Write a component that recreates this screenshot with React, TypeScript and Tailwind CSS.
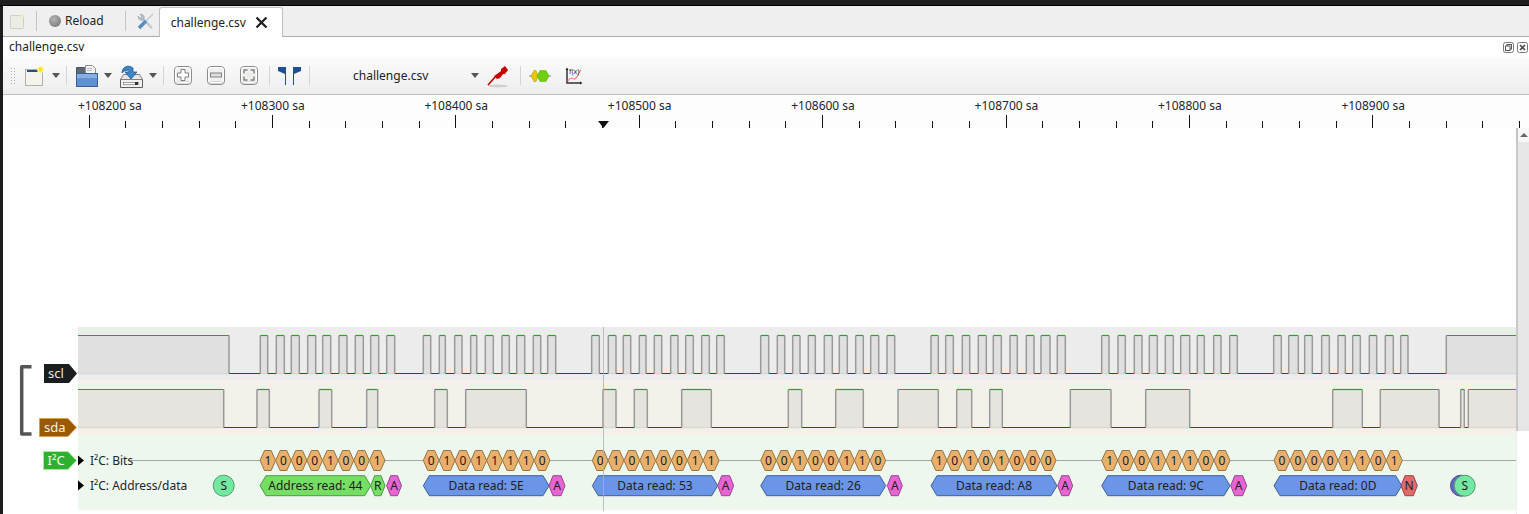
import React from 'react';

// edges read off the reference, in page pixels
const SCL: [number, number][] = [
  [78, 229], [260.3, 267.7], [276.3, 284.3], [291.3, 299.3], [307.7, 315.7], [322.7, 330.7], [339, 347], [355.3, 363.3], [370.7, 378.7], [386.7, 394.7],
  [423.3, 430.7], [439.3, 445.3], [454.7, 462], [470.7, 476.7], [485.3, 493.3], [502, 509.3], [516.7, 524.7], [533.3, 540.7], [547.7, 555.7],
  [591.7, 599.3], [608.3, 616], [623.3, 630.7], [639.3, 646], [654.3, 661.7], [670.7, 678], [685.7, 693.3], [701.7, 709.3], [716.7, 724.3],
  [760.7, 768.7], [777.3, 784.7], [792.7, 800], [808.3, 815.3], [824.3, 832.3], [839.3, 847.3], [855.7, 863.3], [870.7, 878.7], [887, 894.7],
  [931, 938.3], [945.7, 953.3], [962.3, 969.7], [978.3, 986.3], [993.3, 1001.3], [1010, 1017.3], [1026.3, 1034], [1041, 1050], [1057.3, 1065.3],
  [1101.7, 1109], [1118, 1125.3], [1134.3, 1142], [1149.3, 1157.3], [1165.3, 1173.3], [1180.7, 1189.7], [1197.3, 1204.3], [1213.7, 1221], [1229.7, 1237.3],
  [1273.7, 1281.3], [1288.7, 1298.3], [1304.7, 1312.3], [1321.7, 1329.3], [1338, 1345.3], [1352.7, 1360.3], [1369.3, 1376.7], [1385.3, 1393.3], [1400.7, 1408],
  [1446.3, 1516],
];

const SDA: [number, number][] = [
  [78, 223.7], [257, 269.3], [319, 331.7], [366.7, 377.7], [434.7, 447.3], [465.7, 526.3], [603, 616], [634.3, 647.3], [681.7, 711.3],
  [788.3, 801.7], [835.7, 863.3], [898, 938.3], [956.7, 971.7], [989.7, 1002.3], [1070.3, 1111], [1145.7, 1189.7],
  [1332.7, 1362.3], [1380.3, 1439], [1460.7, 1464.3], [1468.3, 1516],
];

const BITS: { from: number; to: number; bits: string }[] = [
  { from: 260, to: 385, bits: '10001001' },
  { from: 423.3, to: 550, bits: '01011110' },
  { from: 592.3, to: 719, bits: '01010011' },
  { from: 760.7, to: 885.7, bits: '00100110' },
  { from: 931.3, to: 1056, bits: '10101000' },
  { from: 1101.7, to: 1230, bits: '10011100' },
  { from: 1274, to: 1402.3, bits: '00001101' },
];

const WORDS: { from: number; to: number; label: string; ackFrom: number; ackTo: number }[] = [
  { from: 423.3, to: 549, label: 'Data read: 5E', ackFrom: 549, ackTo: 565 },
  { from: 592.3, to: 717.7, label: 'Data read: 53', ackFrom: 717.7, ackTo: 733.7 },
  { from: 760.7, to: 885.7, label: 'Data read: 26', ackFrom: 887.3, ackTo: 902.3 },
  { from: 931, to: 1057, label: 'Data read: A8', ackFrom: 1057.7, ackTo: 1072.7 },
  { from: 1101.7, to: 1230, label: 'Data read: 9C', ackFrom: 1230.7, ackTo: 1246.7 },
];

const LABELS = ['+108200 sa', '+108300 sa', '+108400 sa', '+108500 sa', '+108600 sa', '+108700 sa', '+108800 sa', '+108900 sa'];

function Hex({ from, to, y, h, fill, stroke, label, tip = 6 }: { from: number; to: number; y: number; h: number; fill: string; stroke: string; label: string; tip?: number }) {
  const t = Math.min(tip, (to - from) / 2);
  const top = y - h / 2;
  const bot = y + h / 2;
  return (
    <g>
      <polygon points={`${from},${y} ${from + t},${top} ${to - t},${top} ${to},${y} ${to - t},${bot} ${from + t},${bot}`} fill={fill} stroke={stroke} strokeWidth="1" />
      <text x={(from + to) / 2} y={y + 4.4} textAnchor="middle" fontSize="12" fill="#22201c">{label}</text>
    </g>
  );
}

function Wave({ high, hi, lo, under }: { high: [number, number][]; hi: number; lo: number; under: string }) {
  return (
    <g>
      {high.map(([a, b], i) => (
        <rect key={i} x={a} y={hi} width={b - a} height={lo - hi + 0.5} fill="#000" fillOpacity="0.05" />
      ))}
      <line x1="78" x2="1516" y1={lo} y2={lo} stroke="#cc0000" strokeWidth="1.2" />
      {high.map(([a, b], i) => (
        <g key={i}>
          <line x1={a} x2={b} y1={lo} y2={lo} stroke={under} strokeWidth="1.4" />
          <line x1={a} x2={b} y1={hi} y2={hi} stroke="#00bb00" strokeWidth="1.2" />
          {a > 78 && <line x1={a} x2={a} y1={hi} y2={lo} stroke="#9a9a9a" strokeWidth="1.5" />}
          {b < 1516 && <line x1={b} x2={b} y1={hi} y2={lo} stroke="#9a9a9a" strokeWidth="1.5" />}
        </g>
      ))}
    </g>
  );
}

function Ruler() {
  const ticks = [];
  for (let i = 0; i < 40; i++) {
    const x = Math.round(89.5 + i * 36.68) - 0.5;
    ticks.push(<line key={i} x1={x} x2={x} y1={i % 5 === 0 ? 20 : 26} y2="33" stroke="#111" strokeWidth="1" />);
  }
  return (
    <svg width="1526" height="33" viewBox="3 95 1526 33" className="block bg-[#fdfdfd]">
      <g transform="translate(0 95)">{ticks}</g>
      {LABELS.map((l, i) => (
        <text key={l} x={i === 0 ? 78 : 241 + (i - 1) * 183.4} y="110" fontSize="12" fill="#20242c">{l}</text>
      ))}
      <polygon points="598,121 609,121 603.5,128" fill="#111" />
    </svg>
  );
}

function Traces() {
  return (
    <svg width="1438" height="386" viewBox="78 128 1438 386" className="block">
      <rect x="78" y="327" width="1438" height="53" fill="#ececec" />
      <rect x="78" y="380" width="1438" height="55" fill="#f4f0ea" />
      <rect x="78" y="435" width="1438" height="75" fill="#eef7ee" />
      <Wave high={SCL} hi={335.5} lo={373.5} under="#d6d6d6" />
      <Wave high={SDA} hi={389.5} lo={427.5} under="#dcd8d0" />
      <line x1="128" x2="1516" y1="460.5" y2="460.5" stroke="#a4a8a4" strokeWidth="1" />
      <polygon points="78,455.5 84,460.5 78,465.5" fill="#000" />
      <polygon points="78,480.5 84,485.5 78,490.5" fill="#000" />
      <text x="90" y="465" fontSize="12" fill="#22242a">I²C: Bits</text>
      <text x="90" y="490" fontSize="12" fill="#22242a">I²C: Address/data</text>
      {BITS.map((g) => {
        const w = (g.to - g.from) / g.bits.length;
        return g.bits.split('').map((b, i) => (
          <Hex key={`${g.from}-${i}`} from={g.from + i * w} to={g.from + (i + 1) * w} y={460.5} h={20} fill="#e8b06c" stroke="#94733f" label={b} tip={4.5} />
        ));
      })}
      <circle cx="223.7" cy="485.7" r="10.5" fill="#74e8a0" stroke="#4d9e6e" />
      <Hex from={260} to={370.7} y={485.7} h={20} fill="#74df62" stroke="#4c9a40" label="Address read: 44" />
      <Hex from={370.7} to={385} y={485.7} h={20} fill="#74df62" stroke="#4c9a40" label="R" tip={4} />
      <Hex from={386.7} to={401.5} y={485.7} h={20} fill="#e765d3" stroke="#984490" label="A" tip={4} />
      {WORDS.map((w) => (
        <g key={w.label}>
          <Hex from={w.from} to={w.to} y={485.7} h={20} fill="#6b95e6" stroke="#3f5f98" label={w.label} />
          <Hex from={w.ackFrom} to={w.ackTo} y={485.7} h={20} fill="#e765d3" stroke="#984490" label="A" tip={4} />
        </g>
      ))}
      <Hex from={1274} to={1401.7} y={485.7} h={20} fill="#6b95e6" stroke="#3f5f98" label="Data read: 0D" />
      <Hex from={1401} to={1417.3} y={485.7} h={20} fill="#e46a6a" stroke="#96453f" label="N" tip={4} />
      <circle cx="1461" cy="485.7" r="10.5" fill="#6a63c8" stroke="#4c4a90" />
      <circle cx="1464.7" cy="485.7" r="10.5" fill="#74e8a0" stroke="#4d9e6e" />
      <text x="223.7" y="490" textAnchor="middle" fontSize="12" fill="#22201c">S</text>
      <text x="1464.7" y="490" textAnchor="middle" fontSize="12" fill="#22201c">S</text>
      <line x1="603.5" x2="603.5" y1="327" y2="511" stroke="#b0b0b0" strokeOpacity="0.8" strokeWidth="1" />
    </svg>
  );
}

function Headers() {
  return (
    <svg width="75" height="386" viewBox="3 128 75 386" className="block">
      <path d="M31.5 366.7 H21.7 V434 H31.5" fill="none" stroke="#555" strokeWidth="3.5" strokeLinejoin="round" />
      <polygon points="44,364 69,364 77,373.5 69,383 44,383" fill="#1b1e1e" />
      <text x="48" y="378" fontSize="13" fill="#e8e8e8">scl</text>
      <polygon points="39.5,418.5 68,418.5 76.5,427.5 68,436.5 39.5,436.5" fill="#9a5a00" stroke="#d9a050" />
      <text x="44" y="432" fontSize="13" fill="#f4f0e8">sda</text>
      <polygon points="43.5,451.5 68,451.5 76.5,460.5 68,469.5 43.5,469.5" fill="#30b030" stroke="#a8e8a0" />
      <text x="47.5" y="465" fontSize="13" fill="#f0fff0">I²C</text>
    </svg>
  );
}

function Sep() {
  return <div className="w-px h-[19px] bg-[#d4d4d4]" />;
}

function Caret() {
  return <div className="w-0 h-0 border-x-4 border-x-transparent border-t-[5px] border-t-[#555]" />;
}

function RoundBtn({ children }: { children: React.ReactNode }) {
  return (
    <svg width="18" height="19" viewBox="0 0 18 19">
      <rect x="0.5" y="0.5" width="17" height="18" rx="3.5" fill="#f0f0ee" stroke="#8c8c8a" />
      <path d="M2 16.5h14" stroke="#c4c4c2" strokeWidth="2" />
      <rect x="1.5" y="1.5" width="15" height="15" rx="2.5" fill="none" stroke="#fff" />
      {children}
    </svg>
  );
}

function NewIcon() {
  return (
    <svg width="19" height="20" viewBox="0 0 19 20">
      <rect x="0.5" y="3.5" width="17" height="16" fill="#f4f4ec" stroke="#b0b0a8" />
      <rect x="2" y="4" width="13" height="2" fill="#2a4c8c" />
      <circle cx="15.5" cy="3.5" r="3.5" fill="#fbf3a0" />
      <circle cx="15.5" cy="3.5" r="2.2" fill="#f6e420" />
    </svg>
  );
}

function Toolbar() {
  return (
    <div className="h-[38px] flex items-center bg-gradient-to-b from-[#fbfbfb] to-[#eeeeee] border-b border-[#bdbdbd]">
      <div className="ml-[7px] w-[5px] h-[18px] bg-[radial-gradient(#b0b0b0_1px,transparent_1px)] bg-[length:3px_3px]" />
      <div className="ml-[10px]"><NewIcon /></div>
      <div className="ml-[8px]"><Caret /></div>
      <div className="ml-[6px]"><Sep /></div>
      <svg className="ml-[9px]" width="22" height="22" viewBox="0 0 22 22">
        <path d="M0.5 2.5h8l2 2h3v17h-13z" fill="#5d6a7c" stroke="#4a5563" />
        <path d="M9.5 0.5h7l3 3v9h-10z" fill="#f4f4f4" stroke="#8f8f8f" />
        <path d="M11 3.5h5M11 5.5h5" stroke="#b8b8b8" />
        <rect x="0.5" y="8.5" width="21" height="13" fill="#5f90d2" stroke="#3b5f92" />
        <rect x="1" y="9" width="20" height="4" fill="#88aee2" />
      </svg>
      <div className="ml-[6px]"><Caret /></div>
      <svg className="ml-[8px]" width="23" height="24" viewBox="0 0 23 24">
        <path d="M0.5 15.5h22v8H0.5z" fill="#f0f0f0" stroke="#5e5e5e" />
        <path d="M3.5 10.5h16l3 5H0.5z" fill="#e6e6e6" stroke="#808080" />
        <rect x="3.5" y="18.5" width="15" height="2" fill="#fff" stroke="#666" strokeWidth="0.6" />
        <rect x="15" y="18" width="3" height="3" fill="#333" />
        <path d="M2 9C2 3 8 0 13 4l0 4h4l-6 7-6-7h4C9 6 6 5 2 9z" fill="#3f86c8" stroke="#25598c" strokeWidth="0.8" />
      </svg>
      <div className="ml-[6px]"><Caret /></div>
      <div className="ml-[6px]"><Sep /></div>
      <div className="ml-[10px]">
        <RoundBtn><path d="M7 3.5h4v3.5h3.5v4H11v3.5H7V11H3.5V7H7z" fill="#fff" stroke="#808080" /></RoundBtn>
      </div>
      <div className="ml-[15px]">
        <RoundBtn><rect x="3.5" y="7" width="11" height="4" fill="#dedede" stroke="#808080" /></RoundBtn>
      </div>
      <div className="ml-[15px]">
        <RoundBtn>
          <path d="M4 7.5V4h3.5M10.5 4H14v3.5M14 10.5V14h-3.5M7.5 14H4v-3.5" fill="none" stroke="#808080" strokeWidth="1.4" />
          <rect x="7" y="7" width="4" height="4" fill="#e8e8e8" />
        </RoundBtn>
      </div>
      <div className="ml-[11px]"><Sep /></div>
      <svg className="ml-[8px]" width="23" height="20" viewBox="0 0 23 20">
        <path d="M0 1h8v18H7V8L0 5z" fill="#204f96" />
        <path d="M23 1h-8v18h1V8l7-3z" fill="#204f96" />
      </svg>
      <div className="ml-[8px]"><Sep /></div>
      <span className="ml-[43px] w-[118px] text-[12px] text-[#222]">challenge.csv</span>
      <Caret />
      <svg className="ml-[8px]" width="22" height="24" viewBox="0 0 22 24">
        <ellipse cx="11" cy="22" rx="10" ry="1.5" fill="#cfcfcf" />
        <path d="M1 21L9 12" stroke="#b80000" strokeWidth="1.6" />
        <path d="M7 12l3 3 3-1 3-4 2 0 3-4-3-4-4 3 0 2-4 3z" fill="#c80000" />
      </svg>
      <div className="ml-[11px]"><Sep /></div>
      <svg className="ml-[8px]" width="22" height="12" viewBox="0 0 22 12">
        <path d="M0 6h22" stroke="#888" />
        <polygon points="2,6 5,0.5 7,0.5 9,6 7,11.5 5,11.5" fill="#e8c800" stroke="#a89000" strokeWidth="0.5" />
        <polygon points="8,6 11,0.5 17,0.5 20,6 17,11.5 11,11.5" fill="#70d010" stroke="#58a808" strokeWidth="0.5" />
      </svg>
      <svg className="ml-[14px]" width="18" height="18" viewBox="0 0 18 18">
        <path d="M2 2v14h14" fill="none" stroke="#333" strokeWidth="1.5" />
        <path d="M0.5 3L2 0.5 3.5 3zM15 14.5L17.5 16 15 17.5z" fill="#222" />
        <path d="M3 14c3-6 5 0 8-3s3-7 5-8" fill="none" stroke="#f08080" strokeWidth="1.2" />
        <text x="4" y="6.5" fontSize="7" fill="#333">f(x)</text>
      </svg>
    </div>
  );
}

function TabBar() {
  return (
    <div className="h-[31px] flex items-center bg-[#efefef] border-b border-[#acacac] text-[12px] text-[#222]">
      <svg className="ml-[7px]" width="15" height="16" viewBox="0 0 15 16">
        <rect x="0.5" y="2.5" width="13" height="13" rx="1" fill="#ecece4" stroke="#cfcfc8" />
        <circle cx="12.5" cy="2.5" r="2" fill="#f4eeb0" />
      </svg>
      <div className="ml-[11px] w-px h-[20px] bg-[#c4c4c4]" />
      <div className="ml-[12px] w-[12px] h-[12px] rounded-full bg-[radial-gradient(circle_at_40%_35%,#b4b4b4,#6e6e6e)]" />
      <span className="ml-[4px]">Reload</span>
      <div className="ml-[21px] w-px h-[20px] bg-[#c4c4c4]" />
      <svg className="ml-[11px]" width="17" height="17" viewBox="0 0 17 17">
        <path d="M6 6l9 9" stroke="#c4ccd4" strokeWidth="2.5" fill="none" />
        <path d="M1 3c0 3 2 5 5 4l1-1c1-3-1-5-4-5l2 3-2 1z" fill="#b4c0cc" stroke="#8c98a4" strokeWidth="0.5" />
        <path d="M16 1L9 8" stroke="#c8ccd0" strokeWidth="1.6" fill="none" />
        <path d="M9 8L2 15" stroke="#5a8cc4" strokeWidth="3.5" fill="none" />
      </svg>
      <div className="ml-[5px] relative top-px w-[124px] h-[30px] self-end flex items-center bg-white border border-b-0 border-[#c0c0c0] rounded-t-[3px]">
        <span className="ml-[11px] w-[84px]">challenge.csv</span>
        <svg width="13" height="13" viewBox="0 0 13 13">
          <path d="M1.5 1.5l10 10M11.5 1.5l-10 10" stroke="#1c1c1c" strokeWidth="2.2" />
        </svg>
      </div>
    </div>
  );
}

function TitleBar() {
  return (
    <div className="h-[20px] flex items-center justify-between bg-white text-[12px] text-[#222]">
      <span className="ml-[6px]">challenge.csv</span>
      <div className="flex items-center gap-[3px] mr-[1px]">
        <svg width="11" height="11" viewBox="0 0 11 11">
          <rect x="0.5" y="0.5" width="10" height="10" rx="2" fill="none" stroke="#777" />
          <rect x="4" y="2.5" width="4.5" height="4.5" fill="none" stroke="#555" />
          <rect x="2.5" y="4" width="4.5" height="4.5" fill="#fff" stroke="#555" />
        </svg>
        <svg width="11" height="11" viewBox="0 0 11 11">
          <rect x="0.5" y="0.5" width="10" height="10" rx="2" fill="none" stroke="#777" />
          <path d="M3 3l5 5M8 3l-5 5" stroke="#444" strokeWidth="1.6" />
        </svg>
      </div>
    </div>
  );
}

function ScrollBar() {
  return (
    <div className="w-[13px] flex flex-col">
      <div className="h-[14px] flex items-center justify-center bg-[#f6f6f6] border-l-2 border-[#c4c4c4]">
        <div className="w-0 h-0 border-x-4 border-x-transparent border-b-[4px] border-b-[#666]" />
      </div>
      <div className="h-[289px] bg-[#e6e6e6] border-l-2 border-[#c8c8c8]" />
      <div className="flex-1 bg-white border-l border-[#eee]" />
    </div>
  );
}

export default function App() {
  return (
    <div className="w-[1529px] h-[514px] overflow-hidden flex flex-col bg-white font-['Noto_Sans',sans-serif]">
      <div className="h-[6px] bg-[#1f1f1f] border-b border-black" />
      <div className="flex-1 flex">
        <div className="w-[3px] bg-[#1c1c1c]" />
        <div className="flex-1 flex flex-col">
          <TabBar />
          <TitleBar />
          <Toolbar />
          <Ruler />
          <div className="flex-1 flex">
            <Headers />
            <Traces />
            <ScrollBar />
          </div>
        </div>
      </div>
    </div>
  );
}
